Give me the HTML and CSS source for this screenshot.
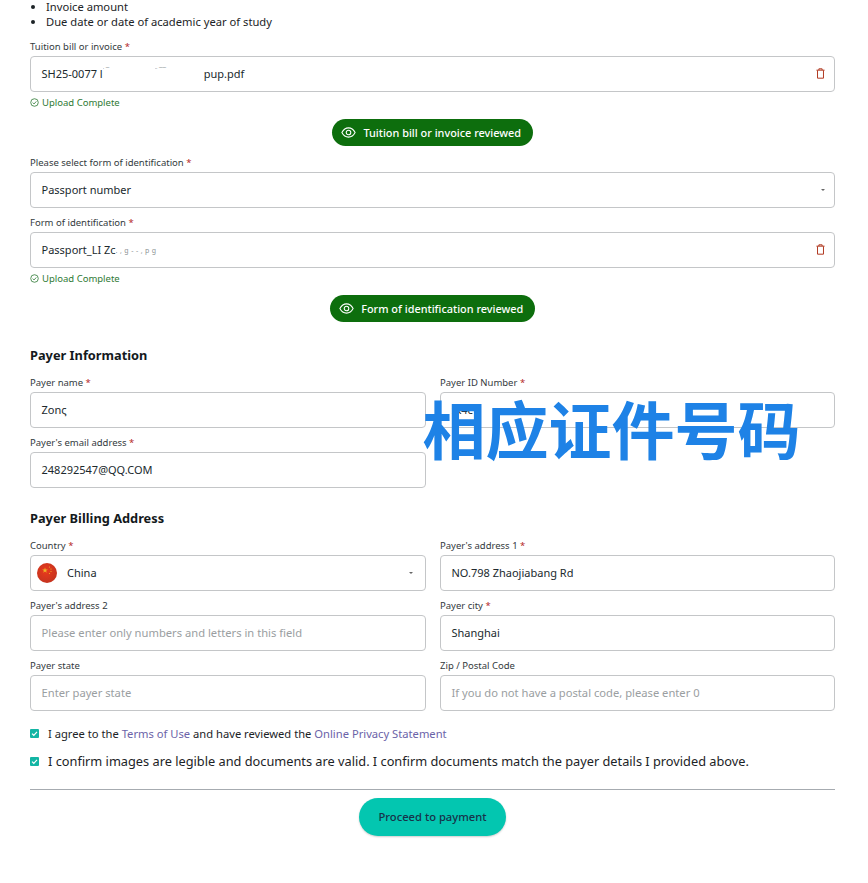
FILE: index.html
```html
<!DOCTYPE html>
<html lang="en">
<head>
<meta charset="utf-8">
<title>Payment details</title>
<link rel="stylesheet" href="styles.css">
</head>
<body>
<main class="page">
  <ul class="doc-list">
    <li>Invoice amount</li>
    <li>Due date or date of academic year of study</li>
  </ul>

  <div class="field">
    <label class="label">Tuition bill or invoice <span class="req">*</span></label>
    <div class="box"><span class="value">SH25-0077 l<span class="blur b1">˙ ‾</span><span class="blur b2">˙˙ ‾‾</span>pup.pdf</span>
      <svg class="trash" viewBox="0 0 10 12"><path d="M0.5 2.300h9M3.200 2.200V.8h3.600v1.400M1.700 2.500v8.700h6.600V2.500" fill="none" stroke="#b0371e" stroke-width="1.100"/></svg>
    </div>
    <div class="upload"><svg class="ok" viewBox="0 0 10 10"><circle cx="5" cy="5" r="4.200" fill="none" stroke="#2f7a35" stroke-width=".9"/><path d="M3 5.100l1.500 1.500L7 3.800" fill="none" stroke="#2f7a35" stroke-width=".9"/></svg>Upload Complete</div>
  </div>
  <div class="review-row">
    <button class="review review-a"><svg class="eye" viewBox="0 0 16 12"><path d="M.8 6C2.500 2.800 5 1 8 1s5.500 1.800 7.200 5C13.500 9.200 11 11 8 11S2.500 9.200.8 6z" fill="none" stroke="#fff" stroke-width="1.200"/><circle cx="8" cy="6" r="2.500" fill="none" stroke="#fff" stroke-width="1.200"/></svg>Tuition bill or invoice reviewed</button>
  </div>

  <div class="field field-tight">
    <label class="label">Please select form of identification <span class="req">*</span></label>
    <div class="box"><span class="value">Passport number</span><span class="caret caret-wide"></span></div>
  </div>
  <div class="field field-after">
    <label class="label">Form of identification <span class="req">*</span></label>
    <div class="box"><span class="value">Passport_LI Zc<span class="blur b3">.,g--,pg</span></span>
      <svg class="trash" viewBox="0 0 10 12"><path d="M0.5 2.300h9M3.200 2.200V.8h3.600v1.400M1.700 2.500v8.700h6.600V2.500" fill="none" stroke="#b0371e" stroke-width="1.100"/></svg>
    </div>
    <div class="upload"><svg class="ok" viewBox="0 0 10 10"><circle cx="5" cy="5" r="4.200" fill="none" stroke="#2f7a35" stroke-width=".9"/><path d="M3 5.100l1.500 1.500L7 3.800" fill="none" stroke="#2f7a35" stroke-width=".9"/></svg>Upload Complete</div>
  </div>
  <div class="review-row">
    <button class="review review-b"><svg class="eye" viewBox="0 0 16 12"><path d="M.8 6C2.500 2.800 5 1 8 1s5.500 1.800 7.200 5C13.500 9.200 11 11 8 11S2.500 9.200.8 6z" fill="none" stroke="#fff" stroke-width="1.200"/><circle cx="8" cy="6" r="2.500" fill="none" stroke="#fff" stroke-width="1.200"/></svg>Form of identification reviewed</button>
  </div>

  <h2 class="section section-info">Payer Information</h2>
  <div class="grid">
    <div><label class="label">Payer name <span class="req">*</span></label><div class="box"><span class="value">Zonς</span></div></div>
    <div><label class="label">Payer ID Number <span class="req">*</span></label><div class="box"><span class="value">:K4c</span></div></div>
    <div><label class="label">Payer's email address <span class="req">*</span></label><div class="box"><span class="value">248292547@QQ.COM</span></div></div>
  </div>

  <h2 class="section section-billing">Payer Billing Address</h2>
  <div class="grid">
    <div><label class="label">Country <span class="req">*</span></label>
      <div class="box box-country">
        <svg class="flag" viewBox="0 0 20 20"><defs><radialGradient id="flag-red" cx=".45" cy=".4" r=".65"><stop offset="0" stop-color="#ea3a1c"/><stop offset="1" stop-color="#c2331f"/></radialGradient></defs><circle cx="10" cy="10" r="10" fill="url(#flag-red)"/><path d="M8 4.500l.7 2h2.100L9.100 7.700l.6 2L8 8.500l-1.700 1.200.6-2L5.200 6.500h2.100z" fill="#eeb22a"/><circle cx="12.500" cy="4" r=".6" fill="#eeb22a"/><circle cx="14" cy="6" r=".6" fill="#eeb22a"/><circle cx="14" cy="8.500" r=".6" fill="#eeb22a"/><circle cx="12.500" cy="10.500" r=".6" fill="#eeb22a"/></svg>
        <span class="value">China</span><span class="caret caret-country"></span>
      </div>
    </div>
    <div><label class="label">Payer's address 1 <span class="req">*</span></label><div class="box"><span class="value">NO.798 Zhaojiabang Rd</span></div></div>
    <div><label class="label">Payer's address 2</label><div class="box"><span class="hint">Please enter only numbers and letters in this field</span></div></div>
    <div><label class="label">Payer city <span class="req">*</span></label><div class="box"><span class="value">Shanghai</span></div></div>
    <div><label class="label">Payer state</label><div class="box"><span class="hint">Enter payer state</span></div></div>
    <div><label class="label">Zip / Postal Code</label><div class="box"><span class="hint">If you do not have a postal code, please enter 0</span></div></div>
  </div>

  <div class="agree agree-first">
    <span class="check"><svg viewBox="0 0 9 9"><path d="M2 4.600l1.800 1.700L7 2.900" fill="none" stroke="#fff" stroke-width="1.200"/></svg></span>
    <span class="agree-text small">I agree to the <a href="#">Terms of Use</a> and have reviewed the <a href="#">Online Privacy Statement</a></span>
  </div>
  <div class="agree agree-second">
    <span class="check"><svg viewBox="0 0 9 9"><path d="M2 4.600l1.800 1.700L7 2.900" fill="none" stroke="#fff" stroke-width="1.200"/></svg></span>
    <span class="agree-text">I confirm images are legible and documents are valid. I confirm documents match the payer details I provided above.</span>
  </div>
  <hr class="rule">
  <div class="proceed-row"><button class="proceed">Proceed to payment</button></div>

  <div class="stamp">相应证件号码</div>
</main>
</body>
</html>
```

FILE: styles.css
```css
* { box-sizing: border-box; }
html, body { margin: 0; background: #fff; }
body { font-family: "Noto Sans", "Open Sans", sans-serif; color: #1c2326; }
.page { position: relative; width: 868px; height: 883px; padding: 0 33px 0 30px; overflow: hidden; }

.doc-list { margin: -1px 0 0; padding: 0 0 0 16px; font-size: 11.200px; line-height: 15px; }

.doc-list + .field { margin-top: 7px; }
.field-tight { margin-top: 6px; }
.field-after { margin-top: 4px; }
.label { display: block; height: 20px; font-size: 9.500px; line-height: 22px; color: #333a3d; }
.req { color: #b3261e; }

.box { display: flex; align-items: center; height: 36px; padding: 0 10.500px 2px; background: #fff; border: 1px solid #c4c6c8; border-radius: 4px; font-size: 11px; }
.value { color: #20292d; white-space: pre; }
.hint { color: #9a9ea1; font-size: 11.200px; }
.blur { display: inline-block; color: #8d9396; font-size: 7px; vertical-align: 3px; overflow: hidden; }
.b1 { width: 52px; }
.b2 { width: 49px; }
.b3 { width: 50px; letter-spacing: 2.500px; vertical-align: -1px; }

.trash { width: 9px; height: 11px; margin: 1px -1.500px 0 auto; }
.caret { width: 0; height: 0; margin: 2px 0 0 auto; border-left: 2px solid transparent; border-right: 2px solid transparent; border-top: 2.500px solid #666; }
.caret-wide { margin-right: -1.500px; }
.caret-country { margin-right: 2px; }

.upload { display: flex; align-items: center; gap: 3px; height: 20px; font-size: 9.500px; color: #2f7a35; }
.ok { width: 9px; height: 9px; }

.review-row { display: flex; justify-content: center; margin-top: 7px; }
.review { display: flex; align-items: center; justify-content: center; gap: 7.500px; height: 27px; padding: 0 3px 0 0; border: 0; border-radius: 14px; background: #0d6e0d; color: #fff; font-family: inherit; font-size: 10.900px; font-weight: 500; }
.review-a { width: 201px; }
.review-b { width: 205px; }
.eye { width: 15px; height: 11px; }

.section { margin: 0; height: 20px; font-size: 12.800px; line-height: 20px; font-weight: 700; color: #14191c; }
.section-info { margin-top: 23px; }
.section-billing { margin-top: 20px; }
.section + .grid { margin-top: 7px; }

.grid { display: grid; grid-template-columns: 396px 395px; column-gap: 14px; row-gap: 4px; }

.box-country { padding-left: 6px; }
.flag { width: 20px; height: 20px; margin: 2px 10px 0 0; }

.agree { display: flex; align-items: center; height: 16px; }
.agree-first { margin-top: 14px; }
.agree-second { margin-top: 12px; }
.check { display: flex; width: 9px; height: 9px; margin-right: 9px; background: #13b5a4; border-radius: 1px; }
.check svg { width: 9px; height: 9px; }
.agree-text { font-size: 12.780px; white-space: nowrap; color: #1c2326; }
.agree-text.small { font-size: 11.200px; }
.agree-text a { color: #6b63a8; text-decoration: none; }

.rule { margin: 20px 0 0; border: 0; border-top: 1px solid #a6abb0; }
.proceed-row { display: flex; justify-content: center; margin-top: 8px; }
.proceed { width: 147px; height: 38px; padding: 0 0 2px; border: 0; border-radius: 19px; background: #03c6b0; color: #17324a; font-family: inherit; font-size: 11.200px; font-weight: 500; box-shadow: 0 1px 2px rgba(0,0,0,.2); }

.stamp { position: absolute; left: 422.500px; top: 396px; font-family: "Noto Sans CJK SC", sans-serif; font-size: 63px; line-height: 62px; font-weight: 700; color: #1e82e6; white-space: nowrap; }
```
